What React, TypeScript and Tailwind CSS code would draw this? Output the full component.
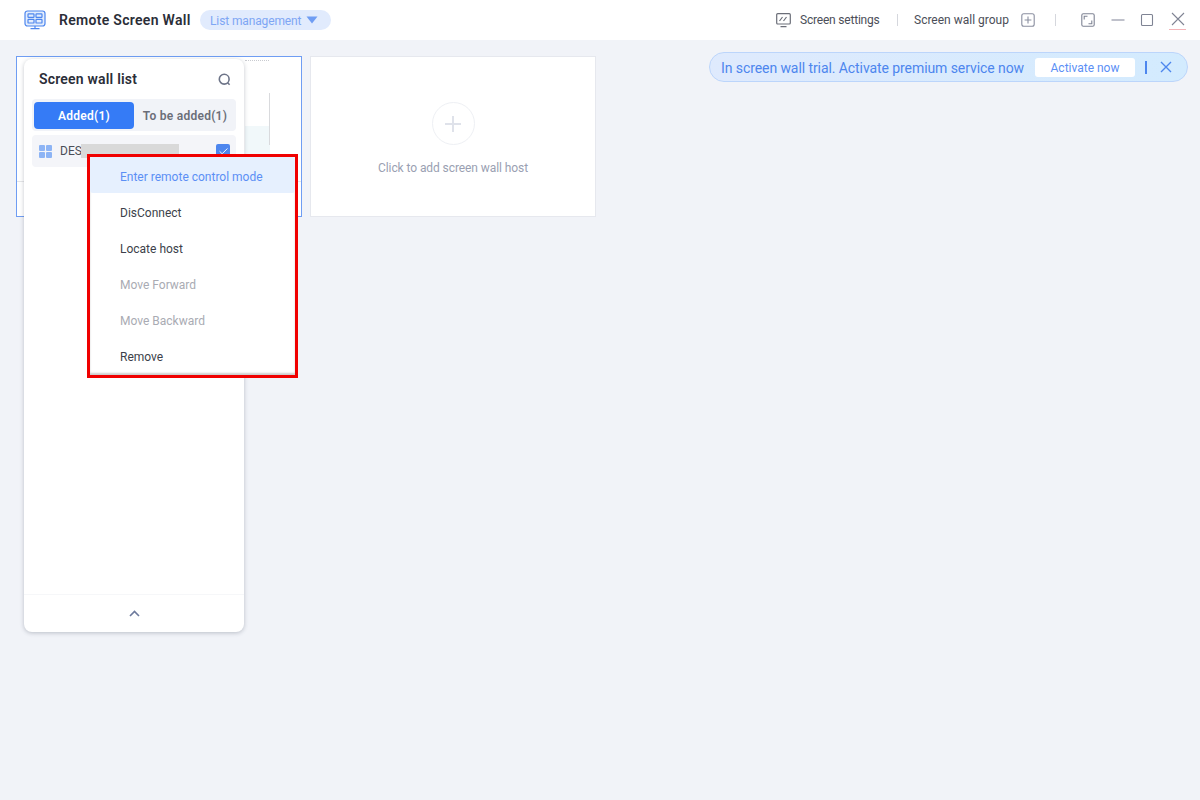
import React from 'react';
import { Check } from 'lucide-react';

const font = { fontFamily: 'Roboto, "Noto Sans", sans-serif' };

const menuItems = [
  { label: 'Enter remote control mode', cls: 'bg-[#e6f0fe] text-[#5b8ff5] rounded-[3px]' },
  { label: 'DisConnect', cls: 'text-[#3c3f4a]' },
  { label: 'Locate host', cls: 'text-[#3c3f4a]' },
  { label: 'Move Forward', cls: 'text-[#a9abb3]' },
  { label: 'Move Backward', cls: 'text-[#a9abb3]' },
  { label: 'Remove', cls: 'text-[#3c3f4a]' },
];

const WallIcon = () => (
  <svg width="22" height="20" viewBox="0 0 22 20" fill="none" stroke="#4d86ee" strokeWidth="1.2">
    <rect x="1" y="1" width="20" height="15" rx="2.5" fill="#e3edfd" />
    <rect x="4" y="3.8" width="6" height="3.6" rx="0.6" />
    <rect x="12" y="3.8" width="6" height="3.6" rx="0.6" />
    <rect x="4" y="9.4" width="6" height="3.6" rx="0.6" />
    <rect x="12" y="9.4" width="6" height="3.6" rx="0.6" />
    <path d="M11 16v2.5M6.5 18.6h9" />
  </svg>
);

const ScreenIcon = () => (
  <svg width="15" height="15" viewBox="0 0 15 15" fill="none" stroke="#6b6e78" strokeWidth="1.2">
    <rect x="0.7" y="0.7" width="13.6" height="10.3" rx="1" />
    <path d="M3.5 8l3-4M7.5 8l3-4M4.5 13.6h6" />
  </svg>
);

const App: React.FC = () => {
  return (
    <div className="relative w-[1200px] h-[800px] overflow-hidden bg-[#f1f3f8]" style={font}>
      <header className="h-10 bg-white flex items-center pl-[24px]">
        <WallIcon />
        <span className="ml-[13px] w-[131px] whitespace-nowrap text-[14px] leading-[20px] font-semibold tracking-[0.3px] text-[#2b2e38]">Remote Screen Wall</span>
        <div className="ml-[10px] h-5 w-[131px] rounded-full bg-[#e1ebfd] flex items-center pl-[10px] text-[12px] leading-[20px] text-[#7ea6f4]">
          <span className="w-[91px] whitespace-nowrap tracking-[-0.12px] pt-px">List management</span>
          <svg width="12" height="8" viewBox="0 0 12 8" className="ml-[5px]">
            <path d="M0.5 0.5h11L6 7.5z" fill="#6f9df3" />
          </svg>
        </div>
        <div className="ml-[445px] flex items-center text-[12px] leading-[20px] text-[#4b4e58]">
          <ScreenIcon />
          <span className="ml-[9px] w-[81px] whitespace-nowrap tracking-[-0.2px]">Screen settings</span>
          <span className="ml-[16px] h-[12px] w-px bg-[#d5d7dd]" />
          <span className="ml-[16px] w-[95px] whitespace-nowrap">Screen wall group</span>
          <svg width="14" height="14" viewBox="0 0 14 14" fill="none" stroke="#8a8fa0" strokeWidth="1.1" className="ml-[12px]">
            <rect x="0.8" y="0.8" width="12.4" height="12.4" rx="2" />
            <path d="M7 3.6v6.8M3.6 7h6.8" />
          </svg>
          <span className="ml-[20px] h-[12px] w-px bg-[#d5d7dd]" />
          <svg width="14" height="14" viewBox="0 0 14 14" fill="none" stroke="#7f8494" strokeWidth="1.1" className="ml-[25px]">
            <rect x="0.8" y="0.8" width="12.4" height="12.4" rx="1.5" />
            <path d="M3.2 6.5V3.2H6.5M10.8 7.5v3.3H7.5" />
          </svg>
          <svg width="14" height="14" viewBox="0 0 14 14" fill="none" stroke="#8a8fa0" strokeWidth="1.1" className="ml-[16px]">
            <path d="M0.5 7h13" />
          </svg>
          <svg width="14" height="14" viewBox="0 0 14 14" fill="none" stroke="#7f8494" strokeWidth="1.1" className="ml-[15px]">
            <rect x="1.5" y="1.5" width="11" height="11" rx="1" />
          </svg>
          <div className="ml-[15px] h-[20px] w-[17px] flex flex-col items-center justify-end border-b border-[#f3b4b8]">
            <svg width="14" height="14" viewBox="0 0 14 14" fill="none" stroke="#7f8494" strokeWidth="1.1" className="mb-[3px]">
              <path d="M1 1l12 12M13 1L1 13" />
            </svg>
          </div>
        </div>
      </header>

      <main className="flex gap-2 pl-4 pt-4">
        <div className="relative h-[161px] w-[286px] border border-[#6f9df3] bg-white overflow-hidden">
          <div className="absolute left-[228px] top-[69px] h-[40px] w-[25px] bg-[#f1f8fa]" />
          <div className="absolute left-[228px] top-[3px] w-[24px] border-t border-dotted border-[#c9cbd0]" />
          <div className="absolute left-[252px] top-[36px] h-[52px] w-px bg-[#d9dadd]" />
          <div className="absolute left-0 right-0 top-[124px] h-px bg-[#e5e6e8]" />
        </div>
        <div className="h-[161px] w-[286px] border border-[#e6e8ee] bg-white flex flex-col items-center pt-[45px]">
          <div className="w-[43px] h-[43px] rounded-full border border-[#eef0f4] flex items-center justify-center">
            <svg width="16" height="16" viewBox="0 0 16 16" stroke="#dfe2ea" strokeWidth="2">
              <path d="M8 0v16M0 8h16" />
            </svg>
          </div>
          <span className="mt-[14px] text-[12px] leading-[18px] tracking-[-0.08px] text-[#9a9fb2]">Click to add screen wall host</span>
        </div>
      </main>

      {/* list panel */}
      <aside className="absolute left-6 top-[59px] h-[573px] w-[220px] rounded-[8px] bg-white shadow-[0_1px_4px_rgba(60,70,90,0.3)] flex flex-col">
        <div className="flex items-center justify-between pl-[15px] pr-[13px] pt-[9px]">
          <span className="text-[14px] leading-[22px] font-semibold tracking-[0.2px] text-[#2b2e38]">Screen wall list</span>
          <svg width="13" height="13" viewBox="0 0 13 13" fill="none" stroke="#6d7488" strokeWidth="1.6">
            <circle cx="6.2" cy="6.2" r="4.9" />
            <path d="M9.6 9.8l2 2" />
          </svg>
        </div>
        <div className="ml-2 mt-[9px] h-8 w-[204px] rounded-[4px] bg-[#f1f3f8] flex items-center pl-[2px] text-[12px] leading-[20px] font-semibold tracking-[0.25px]">
          <div className="w-[100px] h-[27px] pt-px rounded-[4px] bg-[#357bf6] text-white flex items-center justify-center">Added(1)</div>
          <div className="flex-1 pt-px text-center text-[#6b6e78]">To be added(1)</div>
        </div>
        <div className="relative ml-2 mt-[4px] h-8 w-[204px] rounded-[4px] bg-[#f4f5f9] flex items-center pl-[7px] text-[12px] leading-[20px] text-[#4b4e58]">
          <div className="grid grid-cols-2 gap-px w-[13px] h-[13px]">
            <span className="bg-[#8db4f5] rounded-[1px]" />
            <span className="bg-[#8db4f5] rounded-[1px]" />
            <span className="bg-[#8db4f5] rounded-[1px]" />
            <span className="bg-[#8db4f5] rounded-[1px]" />
          </div>
          <span className="ml-[8px] w-[21px]">DES</span>
          <span className="h-[14px] w-[98px] bg-[#d9d9d9]" />
          <div className="absolute right-[6px] top-[9px] w-[14px] h-[14px] rounded-[2px] bg-[#4d86ee] flex items-center justify-center">
            <Check size={11} strokeWidth={2} className="text-white" />
          </div>
        </div>
        <div className="mt-auto h-[38px] border-t border-[#f6f7f9] flex items-center justify-center">
          <svg width="11" height="7" viewBox="0 0 11 7" fill="none" stroke="#6d7a9c" strokeWidth="1.6">
            <path d="M1 6l4.5-4.5L10 6" />
          </svg>
        </div>
      </aside>

      {/* context menu */}
      <div className="absolute left-[87px] top-[154px] w-[211px] h-[224px] border-[3px] border-[#f00000] bg-white shadow-[inset_0_-2px_2px_rgba(0,0,0,0.2)]">
        {menuItems.map((item) => (
          <div key={item.label} className={`h-9 flex items-center pt-[4px] pl-[30px] text-[12px] leading-[20px] ${item.cls}`}>
            {item.label}
          </div>
        ))}
      </div>

      {/* trial banner */}
      <div className="absolute left-[709px] top-[52px] h-[30px] w-[479px] rounded-full border border-[#bcd5fb] bg-gradient-to-r from-[#dfeafd] to-[#d3ebfe] flex items-center pl-[11px] text-[14px] leading-[20px] text-[#4d86ee]">
        <span className="w-[303px] pt-px whitespace-nowrap tracking-[-0.08px]">In screen wall trial. Activate premium service now</span>
        <div className="ml-[11px] h-[19px] w-[100px] pt-px rounded-[3px] bg-white flex items-center justify-center text-[12px] text-[#5b8ff5]">Activate now</div>
        <span className="ml-[10px] h-[13px] w-[2px] bg-[#4d86ee]" />
        <svg width="12" height="12" viewBox="0 0 12 12" fill="none" stroke="#4d86ee" strokeWidth="1.4" className="ml-[13px]">
          <path d="M1 1l10 10M11 1L1 11" />
        </svg>
      </div>
    </div>
  );
};

export default App;
